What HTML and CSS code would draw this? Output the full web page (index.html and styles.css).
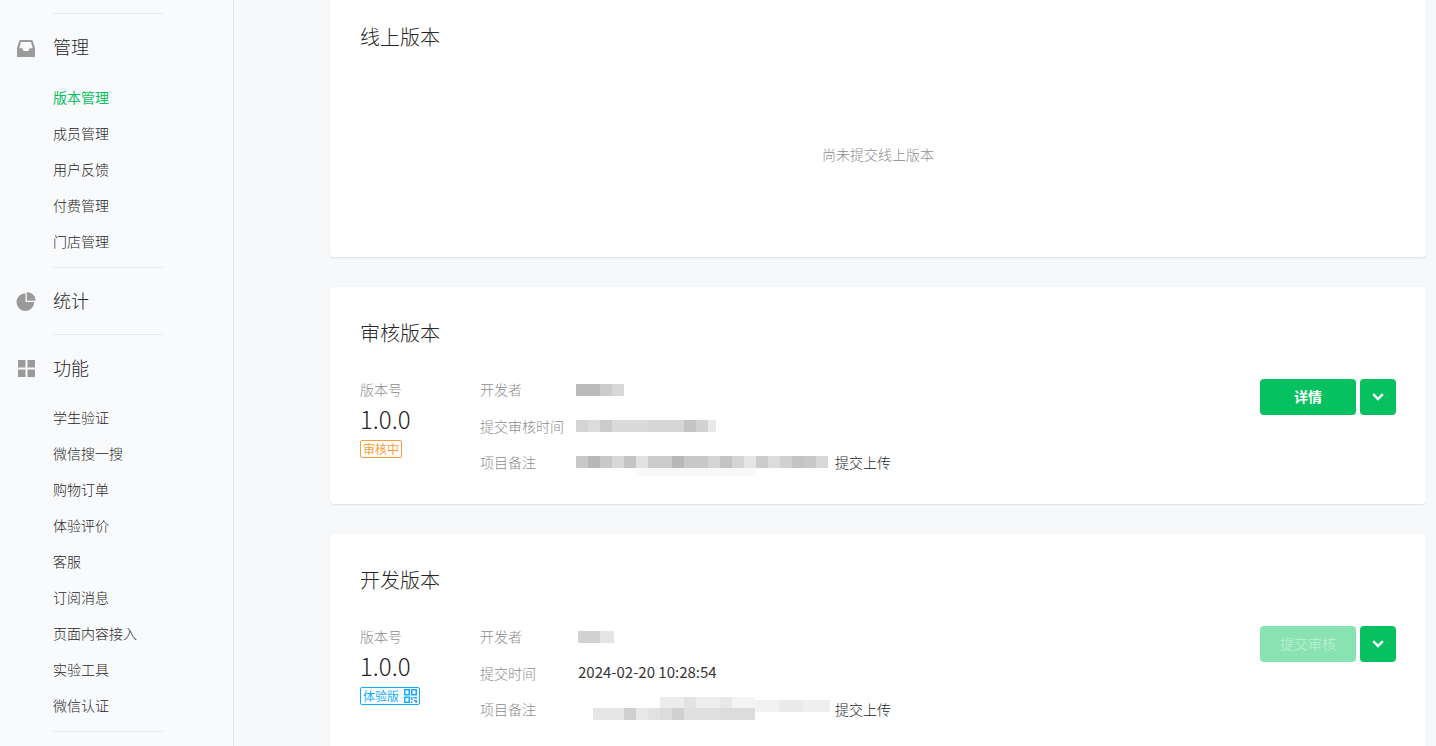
FILE: index.html
```html
<!DOCTYPE html>
<html lang="zh">
<head>
<meta charset="utf-8">
<title>版本管理</title>
<link rel="stylesheet" href="styles.css">
</head>
<body>
<aside class="sidebar">
  <hr class="divider">
  <div class="group-head">
    <svg class="group-icon icon-inbox" viewBox="0 0 18 18"><path fill-rule="evenodd" d="M3.500 1H14.500Q15.500 1 15.800 2L18 9V18H0V9L2.200 2Q2.500 1 3.500 1zM4 3 2.300 9.300H5.500L6.500 12H11.500L12.500 9.300H15.700L14 3z"/></svg>
    <span class="group-text">管理</span>
  </div>
  <ul class="menu">
    <li class="active">版本管理</li>
    <li>成员管理</li>
    <li>用户反馈</li>
    <li>付费管理</li>
    <li>门店管理</li>
  </ul>
  <hr class="divider divider-gap">
  <div class="group-head">
    <svg class="group-icon" viewBox="0 0 18 18"><path d="M8.500 1.200v8.800h8.800A8.900 8.900 0 1 1 8.500 1.200z"/><path d="M9.800 0a8.900 8.900 0 0 1 8.900 8.800H9.800z"/></svg>
    <span class="group-text">统计</span>
  </div>
  <hr class="divider">
  <div class="group-head">
    <svg class="group-icon" viewBox="0 0 18 18"><path d="M1 1h7.500v7.500H1zM10.500 1H18v7.500h-7.500zM1 10.500h7.500V18H1zM10.500 10.500H18V18h-7.500z"/></svg>
    <span class="group-text">功能</span>
  </div>
  <ul class="menu menu-tight">
    <li>学生验证</li>
    <li>微信搜一搜</li>
    <li>购物订单</li>
    <li>体验评价</li>
    <li>客服</li>
    <li>订阅消息</li>
    <li>页面内容接入</li>
    <li>实验工具</li>
    <li>微信认证</li>
  </ul>
  <hr class="divider divider-gap">
</aside>
<main class="main">
  <section class="card card-online">
    <h2 class="card-title">线上版本</h2>
    <p class="empty">尚未提交线上版本</p>
  </section>

  <section class="card">
    <h2 class="card-title">审核版本</h2>
    <div class="card-body">
      <div class="version">
        <div class="label">版本号</div>
        <div class="version-num">1.0.0</div>
        <span class="tag tag-orange">审核中</span>
      </div>
      <div class="details">
        <div class="row"><span class="label row-label">开发者</span><span class="mosaic m-dev-a"></span></div>
        <div class="row"><span class="label row-label">提交审核时间</span><span class="mosaic m-time"></span></div>
        <div class="row"><span class="label row-label">项目备注</span><span class="mosaic m-note-a"></span><span class="row-tail">提交上传</span></div>
      </div>
      <div class="actions">
        <button class="btn btn-main">详情</button>
        <button class="btn btn-more"><svg viewBox="0 0 12 8" class="chev"><path d="M1.200 1.200 6 6l4.800-4.800"/></svg></button>
      </div>
    </div>
  </section>

  <section class="card">
    <h2 class="card-title">开发版本</h2>
    <div class="card-body">
      <div class="version">
        <div class="label">版本号</div>
        <div class="version-num">1.0.0</div>
        <span class="tag tag-blue">体验版<svg class="qr" viewBox="0 0 13 14"><path fill-rule="evenodd" d="M0 0h6v6.500H0zM1.500 1.500v3.500h3v-3.500zM7 0h6v6.500H7zM8.500 1.500v3.500h3v-3.500zM0 7.500h6V14H0zM1.500 9v3.500h3V9zM7 8h1.500v3H7zM9.500 8H13v1.500H9.500zM10 11h3v3h-1.500v-1.500H10zM7 12.500h1.500V14H7z"/></svg></span>
      </div>
      <div class="details">
        <div class="row"><span class="label row-label">开发者</span><span class="mosaic m-dev-b"></span></div>
        <div class="row"><span class="label row-label">提交时间</span><span class="value">2024-02-20 10:28:54</span></div>
        <div class="row"><span class="label row-label">项目备注</span><span class="mosaic m-note-b"></span><span class="row-tail">提交上传</span></div>
      </div>
      <div class="actions">
        <button class="btn btn-main btn-disabled" disabled>提交审核</button>
        <button class="btn btn-more"><svg viewBox="0 0 12 8" class="chev"><path d="M1.200 1.200 6 6l4.800-4.800"/></svg></button>
      </div>
    </div>
  </section>
</main>
</body>
</html>
```
FILE: styles.css
```css
* { box-sizing: border-box; }
html, body { margin: 0; height: 100%; }
body {
  display: flex;
  height: 746px;
  overflow: hidden;
  background: #f6f8f9;
  color: #262626;
  font-family: "Noto Sans CJK SC", "Noto Sans", sans-serif;
  font-size: 14px;
  font-weight: 300;
}
.sidebar {
  flex: 0 0 234px;
  padding-top: 13px;
  background: #f9fafc;
  border-right: 1px solid #e4e8eb;
}
.divider {
  width: 110px;
  height: 1px;
  margin: 0 0 0 53px;
  border: 0;
  background: #e4e8eb;
}
.divider-gap { margin-top: 7px; }
.group-head {
  display: flex;
  align-items: center;
  height: 66px;
  padding-left: 17px;
  font-size: 18px;
}
.group-text { padding-bottom: 2px; }
.group-icon {
  width: 18px;
  height: 18px;
  margin-right: 18px;
  overflow: visible;
  fill: #9a9a9a;
}
.icon-inbox { margin-top: 2px; }
.menu {
  margin: 0;
  padding: 0 0 0 53px;
  list-style: none;
}
.menu-tight { margin-top: -1px; }
.menu li {
  height: 36px;
  line-height: 34px;
  font-size: 14px;
  color: #262626;
}
.menu li.active { color: #07c160; font-weight: 400; }
.main {
  flex: 1;
  min-width: 0;
  margin-top: -9px;
  padding: 0 10px 0 96px;
}
.card {
  padding: 30px 30px 16.5px;
  margin-bottom: 30px;
  background: #fff;
  border-radius: 4px;
  box-shadow: 0 1px 2px rgba(0, 0, 0, .1);
}
.card-online { height: 266px; }
.card-title {
  margin: 0 0 30px;
  font-size: 20px;
  font-weight: 300;
  line-height: 32px;
  color: #262626;
}
.empty {
  margin: 0;
  padding-top: 60px;
  text-align: center;
  line-height: 22px;
  color: #8c8c8c;
}
.card-body { display: flex; }
.version { flex: 0 0 120px; margin-top: -1px; }
.label { color: #8c8c8c; line-height: 22px; }
.version-num {
  margin-top: 2px;
  font-size: 24px;
  line-height: 34px;
  color: #262626;
}
.tag {
  display: inline-flex;
  align-items: center;
  height: 18px;
  margin-top: 4px;
  padding: 0 2px;
  border: 1px solid;
  border-radius: 2px;
  font-size: 12px;
  font-weight: 400;
  line-height: 16px;
}
.tag-orange { color: #fa9d3b; border-color: #fa9d3b; }
.tag-blue { color: #10aeff; border-color: #10aeff; }
.qr { width: 13px; height: 14px; margin-left: 5px; fill: #10aeff; }
.details { flex: 1; min-width: 0; margin-top: -1px; }
.row {
  display: flex;
  align-items: center;
  height: 36.5px;
  padding-bottom: 14.5px;
  line-height: 22px;
}
.row-label { flex: 0 0 98px; }
.value { padding-bottom: 2px; font-size: 15px; font-weight: 400; color: #353535; }
.row-tail { color: #262626; }
.mosaic { display: block; align-self: flex-start; background-repeat: no-repeat; }
.m-dev-a {
  width: 48px;
  height: 12px;
  margin: 6px 0 0 -2px;
  background-image: linear-gradient(90deg, #bbb 0 24px, #ccc 24px 36px, #d8d8d8 36px 48px);
}
.m-dev-b {
  width: 36px;
  height: 12px;
  margin-top: 6px;
  background-image: linear-gradient(90deg, #d2d2d2 0 22px, #e4e4e4 22px 36px);
}
.m-time {
  width: 140px;
  height: 12px;
  margin: 5.500px 0 0 -2px;
  background-image: linear-gradient(90deg, #d4d4d4 0 12px, #dcdcdc 12px 24px, #ccc 24px 36px, #dadada 36px 72px, #d6d6d6 72px 108px, #c4c4c4 108px 120px, #d2d2d2 120px 132px, #e8e8e8 132px 140px);
}
.m-note-a {
  width: 252px;
  height: 20px;
  margin: 5px 7px 0 -2px;
  background-image:
    linear-gradient(90deg, #c8c8c8 0 12px, #b8b8b8 12px 24px, #c8c8c8 24px 36px, #d8d8d8 36px 48px, #c4c4c4 48px 60px, #e2e2e2 60px 72px, #ccc 72px 96px, #b8b8b8 96px 108px, #c8c8c8 108px 132px, #d4d4d4 132px 144px, #c4c4c4 144px 156px, #d4d4d4 156px 168px, #e6e6e6 168px 180px, #ccc 180px 192px, #dcdcdc 192px 204px, #d0d0d0 204px 216px, #c4c4c4 216px 228px, #c8c8c8 228px 240px, #d8d8d8 240px 252px),
    linear-gradient(#f8f8f8, #f8f8f8);
  background-size: 100% 12px, 120px 8px;
  background-position: 0 0, 60px 12px;
}
.m-note-b {
  width: 253px;
  height: 24px;
  margin: -1px 4px 0 0;
  background-image:
    linear-gradient(90deg, #e6e6e6 0 31px, #cfcfcf 31px 43px, #e8e8e8 43px 55px, #e2e2e2 55px 67px, #dcdcdc 67px 79px, #d0d0d0 79px 91px, #e0e0e0 91px 127px, #dcdcdc 127px 162px),
    linear-gradient(90deg, #ececec 0 24px, #e2e2e2 24px 36px, #eee 36px 60px, #e8e8e8 60px 72px, #f4f4f4 72px 95px),
    linear-gradient(90deg, #f2f2f2 0 24px, #eaeaea 24px 48px, #efefef 48px 75px);
  background-size: 162px 12px, 95px 11px, 75px 12px;
  background-position: 15px 11px, 82px 0, 177px 3px;
}
.actions { display: flex; gap: 4px; }
.btn {
  display: flex;
  align-items: center;
  justify-content: center;
  height: 36px;
  padding: 0 0 2px;
  border: 0;
  border-radius: 4px;
  background: #07c160;
  color: #fff;
  font: 700 14px "Noto Sans CJK SC", sans-serif;
}
.btn-main { width: 96px; }
.btn-more { width: 36px; padding: 0; }
.btn-disabled {
  background: #89e2b2;
  color: #b5ecce;
  font-weight: 400;
}
.chev {
  width: 12px;
  height: 8px;
  fill: none;
  stroke: #fff;
  stroke-width: 2.400;
}
```
